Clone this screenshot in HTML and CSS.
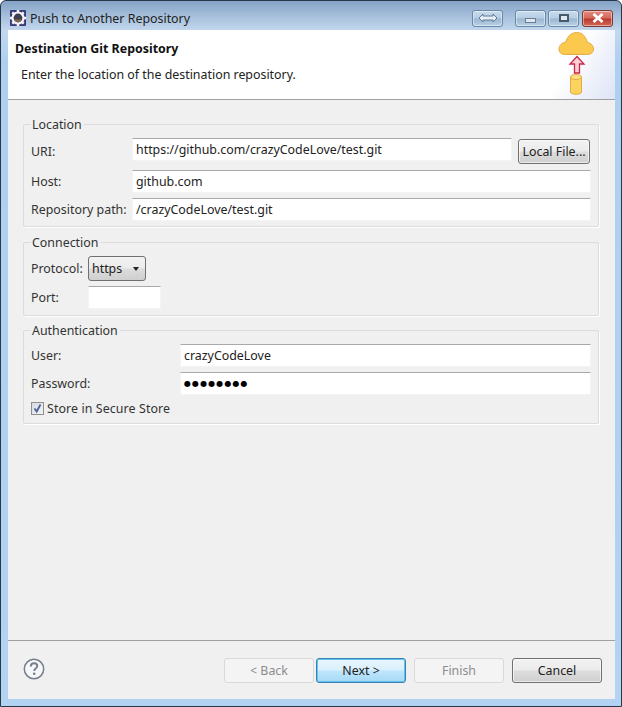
FILE: index.html
```html
<!DOCTYPE html>
<html lang="en">
<head>
<meta charset="utf-8">
<title>Push to Another Repository</title>
<link rel="stylesheet" href="styles.css">
</head>
<body>
<div class="window">
  <div class="titlebar">
    <svg class="app-icon" width="16" height="16" viewBox="0 0 16 16">
      <rect width="16" height="16" rx="1" fill="#3b3a78"/>
      <circle cx="8" cy="8" r="6.6" fill="#f4f4f8"/>
      <g stroke="#f4f4f8" stroke-width="2.4"><path d="M8 0v16M0 8h16M2.3 2.3l11.4 11.4M13.7 2.3L2.3 13.7"/></g>
      <circle cx="8" cy="8" r="4.4" fill="#3f3f52"/>
      <path d="M4 9.5a4.4 4.4 0 0 0 8 0z" fill="#8a6a4a"/>
    </svg>
    <span class="window-title">Push to Another Repository</span>
    <div class="controls">
      <div class="ctl ctl-dock">
        <svg width="20" height="10" viewBox="0 0 20 10"><path d="M1 5l4-4v2h10V1l4 4-4 4V7H5v2z" fill="#e6eef6" stroke="#5f7a96"/></svg>
      </div>
      <div class="ctl ctl-min"><span class="min-glyph"></span></div>
      <div class="ctl ctl-max"><span class="max-glyph"></span></div>
      <div class="ctl ctl-close">
        <svg width="12" height="10" viewBox="0 0 12 10"><path d="M1.5 1l9 8M10.5 1l-9 8" stroke="#fff" stroke-width="2.8"/></svg>
      </div>
    </div>
  </div>
  <div class="client">
    <header class="banner">
      <div class="banner-text">
        <h1 class="banner-title">Destination Git Repository</h1>
        <p class="banner-desc">Enter the location of the destination repository.</p>
      </div>
      <div class="banner-art">
        <svg width="70" height="69" viewBox="0 0 70 69">
          <path d="M19.500 24.500C16 24.500 14 22 14 19c0-3.500 3-6.500 7-7 1-5.500 5.500-9.500 10.500-9.500 4.500 0 8 2.500 9.500 6.500 1.500 2.500 1.500 3 1.500 3.500 3.500.5 6 3.500 6 6.500 0 3-2.500 5.500-6 5.500z" fill="#fcc94f" stroke="#e3ac42"/>
          <path d="M32 26.500l7 7.500h-4.500v9h-5v-9H25z" fill="#fbd0d4" stroke="#c8264a" stroke-width="1.300"/>
          <path d="M25.500 47v15c0 3 11 3 11 0V47z" fill="#fcd35f" stroke="#e3ac42"/>
          <ellipse cx="31" cy="47" rx="5.500" ry="2.500" fill="#fde08a" stroke="#e3ac42"/>
        </svg>
      </div>
    </header>
    <main class="content">
      <section class="group group-location">
        <div class="group-title">Location</div>
        <div class="form form-location">
          <label class="label">URI:</label>
          <div class="field field-uri">https://github.com/crazyCodeLove/test.git</div>
          <button class="btn btn-local">Local File...</button>
          <label class="label">Host:</label>
          <div class="field span-2">github.com</div>
          <label class="label">Repository path:</label>
          <div class="field span-2">/crazyCodeLove/test.git</div>
        </div>
      </section>
      <section class="group group-connection">
        <div class="group-title">Connection</div>
        <div class="form form-connection">
          <label class="label">Protocol:</label>
          <div class="select"><span>https</span><i class="caret"></i></div>
          <label class="label">Port:</label>
          <div class="field field-port"></div>
        </div>
      </section>
      <section class="group">
        <div class="group-title">Authentication</div>
        <div class="form form-auth">
          <label class="label">User:</label>
          <div class="field">crazyCodeLove</div>
          <label class="label">Password:</label>
          <div class="field field-password">●●●●●●●●</div>
          <div class="check-row">
            <span class="checkbox">
              <svg width="11" height="11" viewBox="0 0 11 11"><path d="M2.500 5.500l2.200 3L8.500 1.500" fill="none" stroke="#4d6299" stroke-width="1.800"/></svg>
            </span>
            <span class="check-label">Store in Secure Store</span>
          </div>
        </div>
      </section>
    </main>
    <footer class="footer">
      <svg class="help" width="22" height="22" viewBox="0 0 22 22">
        <circle cx="11" cy="11" r="9.700" fill="#f6f7f8" stroke="#767d8c" stroke-width="1.500"/>
        <path d="M7.800 8.400c0-2 1.400-3.100 3.300-3.100s3.200 1.100 3.200 2.800c0 2.400-3.100 2.400-3.100 4.800" fill="none" stroke="#767d8c" stroke-width="1.900"/>
        <circle cx="11.200" cy="15.800" r="1.300" fill="#767d8c"/>
      </svg>
      <div class="actions">
        <button class="btn btn-wizard btn-disabled btn-back">&lt; Back</button>
        <button class="btn btn-wizard btn-default">Next &gt;</button>
        <button class="btn btn-wizard btn-disabled">Finish</button>
        <button class="btn btn-wizard">Cancel</button>
      </div>
    </footer>
  </div>
</div>
</body>
</html>
```

FILE: styles.css
```css
* { box-sizing: border-box; }
html, body { margin: 0; padding: 0; height: 100%; background: #fff; }
body { font-family: "Noto Sans", "Open Sans", sans-serif; font-size: 12.4px; color: #1e1e1e; }

.window {
  width: 622px;
  height: 707px;
  display: flex;
  flex-direction: column;
  padding: 0 6px 7px 7px;
  border: 1px solid #27384a;
  border-radius: 6px 6px 0 0;
  background: linear-gradient(180deg, #85a3c6 0, #a6bfdb 15px, #c3d8ee 30px, #add0f1 60px, #b2d3f2 100%);
}

.titlebar { height: 29px; flex: none; display: flex; align-items: center; padding: 5px 2px 0 2px; }
.app-icon { flex: none; }
.window-title { margin-left: 4px; color: #222; }
.controls { margin-left: auto; display: flex; align-items: flex-start; height: 17px; }
.ctl {
  width: 31px; height: 17px; display: flex; align-items: center; justify-content: center;
  border: 1px solid #6a87a6; border-radius: 3px;
  background: linear-gradient(180deg, #c9dcee 0, #b5cde3 48%, #9ab6d1 52%, #b9d1e6 100%);
  box-shadow: inset 0 0 0 1px rgba(255,255,255,.45);
}
.ctl-dock { margin-right: 12px; }
.ctl-min { margin-right: 2px; }
.ctl-max { margin-right: 3px; }
.ctl-close { border-color: #7d3a35; background: linear-gradient(180deg, #e08d80 0, #d4685a 48%, #b9382c 52%, #cf6a57 100%); }
.min-glyph { width: 11px; height: 5px; margin-top: 4px; background: #dfe8f2; border: 1px solid #6b7d91; }
.max-glyph { width: 10px; height: 8px; background: #dfe8f2; border: 2px solid #4a5a6d; }

.client { flex: 1; display: flex; flex-direction: column; background: #f0f0f0; min-height: 0; }

.banner { height: 70px; flex: none; display: flex; justify-content: space-between; background: #fff; border-bottom: 1px solid #a0a0a0; }
.banner-text { padding: 10px 0 0 7px; }
.banner-title { margin: 0; font-size: 12.4px; line-height: 17px; font-weight: 700; color: #111; }
.banner-desc { margin: 9px 0 0 6px; line-height: 17px; color: #222; }
.banner-art { width: 72px; padding-left: 2px; background: linear-gradient(120deg, #fff 40%, #eef1fa 70%, #dde4f6 100%); }
.banner-art svg { display: block; }

.content { flex: 1; padding: 24px 16px 0 15px; display: flex; flex-direction: column; }
.group { border: 1px solid #dcdcdc; border-radius: 2px; padding: 0 7px 6px 7px; box-shadow: 1px 1px 0 #fff; }
.group-location { margin-bottom: 15px; padding-bottom: 5px; }
.group-connection { margin-bottom: 14px; padding-bottom: 6px; }
.group-title { width: fit-content; height: 16px; line-height: 16px; margin: -8px 0 5px 0; padding: 0 2px 0 1px; background: #f0f0f0; color: #333; }

.form { display: grid; row-gap: 5px; align-items: center; }
.form-location { grid-template-columns: 101px 380px 79px; grid-template-rows: 27px 23px 23px; }
.form-connection { grid-template-columns: 57px 1fr; grid-template-rows: 25px 23px; }
.form-auth { grid-template-columns: 149px 1fr; grid-template-rows: 23px 23px 17px; }
.label { color: #333; line-height: 17px; }

.field {
  height: 23px; line-height: 21px; padding: 0 3px;
  background: #fff; color: #222;
  border: 1px solid #f4f4f4; border-top-color: #a9a9a9;
}
.field-uri { align-self: start; }
.span-2 { grid-column: span 2; }
.field-port { width: 73px; }
.field-password { font-family: "DejaVu Sans", sans-serif; font-size: 8px; letter-spacing: 1.1px; color: #000; line-height: 22px; }

.select {
  width: 58px; height: 25px; padding: 0 6px 0 3px; display: flex; align-items: center; justify-content: space-between;
  border: 1px solid #707070; border-radius: 3px; color: #222;
  background: linear-gradient(180deg, #f2f2f2 0, #ebebeb 48%, #dcdcdc 52%, #cfcfcf 100%);
}
.caret { width: 0; height: 0; border: 3.5px solid transparent; border-top: 4px solid #222; border-bottom: 0; }

.check-row { grid-column: span 2; display: flex; align-items: center; gap: 3px; color: #333; }
.check-label { letter-spacing: .1px; }
.checkbox {
  width: 13px; height: 13px; display: flex; align-items: center; justify-content: center;
  border: 1px solid #8e8f8f; background: linear-gradient(135deg, #d6dbe3, #f2f4f6);
}

.btn {
  font: inherit; color: #222; padding: 0; height: 25px;
  border: 1px solid #707070; border-radius: 3px;
  background: linear-gradient(180deg, #f2f2f2 0, #ebebeb 48%, #dddddd 52%, #cfcfcf 100%);
  box-shadow: inset 0 0 0 1px rgba(255,255,255,.6);
}
.btn-local { width: 72px; margin: 1px 1px 0 6px; align-self: start; }
.btn-wizard { width: 90px; }
.btn-back { margin-right: 2px; }
.btn-default { margin-right: 8px; border: 1px solid #3c7fb1; box-shadow: inset 0 0 0 1px #5fc5ee; background: linear-gradient(180deg, #eaf6fd 0, #d9f0fc 48%, #bee6fd 52%, #a7d9f5 100%); }
.btn-disabled { color: #8c8c8c; border-color: #d9d9d9; background: #f4f4f4; box-shadow: none; }
.actions .btn-disabled:nth-child(3) { margin-right: 8px; }

.footer { height: 59px; flex: none; display: flex; align-items: flex-start; justify-content: space-between; border-top: 1px solid #a0a0a0; padding: 17px 13px 0 15px; }
.actions { display: flex; }
```
